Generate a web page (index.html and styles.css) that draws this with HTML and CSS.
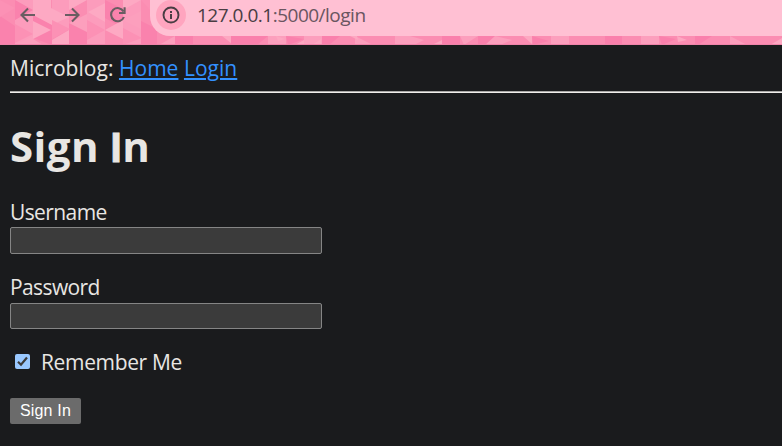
FILE: index.html
```html
<!DOCTYPE html>
<html lang="en">
<head>
<meta charset="utf-8">
<title>Sign In - Microblog</title>
<link rel="stylesheet" href="styles.css">
</head>
<body>
<header class="toolbar">
  <svg class="pattern" width="782" height="45" viewBox="0 0 782 45" aria-hidden="true">
    <path fill="#fb8db2" d="M0 0H782V45H0z"/>
    <path fill="#fc9cbc" d="M15 0H33V45H15zM52 0H69V30L52 20zM87 0H105V45H87zM123 0H141V45H123z"/>
    <path fill="#fa82ad" d="M0 16L15 26V45H0zM15 0L33 10 15 20zM33 14L52 24V45L33 38zM69 23L87 32V45H69zM105 0L123 9V28L105 18zM141 21L157 29V45H141z"/>
    <path fill="#fda9c3" d="M33 0H51V8L69 17 52 25 33 15zM33 39L51 30 33 21zM52 40L69 30V45L52 45zM88 12L105 3V22zM105 30L123 20V39zM69 0H87L69 10zM123 0H141L123 10z"/>
    <path fill="#fc91b5" d="M0 0L15 8 0 17zM15 24L33 34 15 43zM52 20L70 29 52 39zM87 20L105 30 87 40zM123 28L142 38 123 45zM141 0H157V18z"/>
    <path fill="#fc9fbd" d="M69 23L87 14V32zM33 39L43 45H33zM15 45L33 36V45zM123 20L141 11V29zM159 45L175 36V45zM268 36H286V45H268zM304 36H322V45H304zM355 36L373 45H355zM395 36H410L424 40 414 45H395zM460 36H478L464 45zM486 36H495L512 40 500 45H486zM551 36H569V45H551zM641 36H659V45H641zM730 36L747 45H730z"/>
    <path fill="#fa80ac" d="M175 36H193V45H175zM231 36H250V45H231zM250 36H268L257 45H250zM286 36L304 39 288 45zM322 36H340L329 45H322zM442 36H460V45H442zM478 36H495L485 45H478zM532 36L549 41 533 45zM605 36H622V45H605zM659 36L676 39 662 45zM695 36H712L698 45H695z"/>
    <path fill="#fda7c1" d="M222 36H231V43zM276 36L285 39 278 41zM295 45L304 40V45zM312 45L321 39V45zM350 36H357L358 40zM432 45L442 40V45zM523 36H532V44zM677 36L687 40 678 42zM770 45L782 38V45z"/>
    <path fill="#ef83a9" d="M0 44H782V45H0z"/>
  </svg>
  <nav class="controls">
    <svg class="icon" width="16" height="16" viewBox="0 0 16 16"><path d="M15 8H2M8 1.5L1.5 8 8 14.5"/></svg>
    <svg class="icon" width="16" height="16" viewBox="0 0 16 16"><path d="M0 8H13M7 1.5L13.5 8 7 14.5"/></svg>
    <svg class="icon" width="17" height="16" viewBox="0 0 17 16"><path d="M13.5 4.5A6.6 6.6 0 1 0 13.9 10M14.6 .3V6H9"/></svg>
  </nav>
  <div class="address">
    <span class="info"><svg width="18" height="18" viewBox="0 0 18 18"><circle cx="9" cy="9" r="7.5" fill="none" stroke="#493d43" stroke-width="1.9"/><path fill="#493d43" d="M8 8H10V13H8zM8 5H10V7H8z"/></svg></span>
    <span class="url"><span class="host">127.0.0.1</span>:5000/login</span>
  </div>
</header>
<main class="page">
  <div class="menu">Microblog: <a href="#">Home</a> <a href="#">Login</a></div>
  <hr>
  <h1>Sign <span class="plain">I</span>n</h1>
  <form>
    <div class="field"><label for="username">Username</label><input class="text" id="username" type="text"></div>
    <div class="field second"><label for="password">Password</label><input class="text short" id="password" type="password"></div>
    <label class="remember"><span class="check"><svg width="15" height="15" viewBox="0 0 15 15"><path d="M3 7.7L6 10.7 12 3.5"/></svg></span><span class="caption">Remember Me</span></label>
    <button type="button">Sign In</button>
  </form>
</main>
</body>
</html>
```
FILE: styles.css
```css
* { box-sizing: border-box; }
body {
  margin: 0;
  height: 446px;
  overflow: hidden;
  background: #1a1b1d;
  color: #e8e6e3;
  font: 21px/28px "Open Sans", "Noto Sans", sans-serif;
}
.toolbar {
  position: relative;
  display: flex;
  height: 45px;
}
.pattern { position: absolute; inset: 0; }
.controls {
  position: relative;
  display: flex;
  gap: 29px;
  width: 150px;
  padding: 7px 0 0 20px;
}
.icon {
  flex: none;
  fill: none;
  stroke: #695d62;
  stroke-width: 2.1;
}
.address {
  position: relative;
  display: flex;
  flex: 1;
  height: 36px;
  padding-left: 6px;
  background: #ffc0d3;
  border-radius: 0 0 0 20px;
}
.info {
  display: flex;
  align-items: center;
  justify-content: center;
  width: 30px;
  height: 30px;
  border-radius: 50%;
  background: #ffa5bf;
}
.url {
  margin-left: 11px;
  font-size: 19px;
  line-height: 31px;
  letter-spacing: -0.5px;
  color: #6a5560;
  white-space: nowrap;
}
.host { color: #493d43; }
.page { padding: 9px 0 0 10px; }
.menu { letter-spacing: 0.03px; white-space: nowrap; }
a { color: #3391ff; text-decoration-thickness: 2px; text-underline-offset: 2px; }
hr {
  height: 2px;
  margin: 9px 0 0;
  border: 0;
  border-top: 1px solid #aaa9a7;
  background: #f0eeeb;
}
h1 {
  margin: 25px 0 0;
  font-size: 42px;
  line-height: 56px;
  letter-spacing: 0.4px;
}
.plain { font-family: "Liberation Sans", sans-serif; -webkit-text-stroke: 0.8px #e8e6e3; line-height: 1; }
.field { height: 75px; margin-top: 25px; }
.field.second { margin-top: 0; }
.field label { display: block; height: 28px; line-height: 27px; letter-spacing: -0.6px; }
.text {
  display: block;
  width: 312px;
  height: 27px;
  border: 1px solid #858585;
  border-radius: 2px;
  background: #3b3b3b;
}
.short { height: 26px; margin-top: 1px; }
.remember { display: flex; align-items: center; height: 28px; letter-spacing: -0.35px; }
.caption { margin-top: -2px; }
.check {
  display: flex;
  width: 15px;
  height: 15px;
  margin: -3px 11px 0 5px;
  border-radius: 2px;
  background: #99c8ff;
}
.check path { fill: none; stroke: #3b3b3b; stroke-width: 2.2; }
button {
  display: block;
  width: 71px;
  height: 26px;
  margin-top: 21px;
  padding: 0;
  border: 0;
  border-radius: 2px;
  background: #6b6b6b;
  color: #fff;
  font: 16px/24px "Liberation Sans", sans-serif;
  letter-spacing: 0.2px;
}
```
